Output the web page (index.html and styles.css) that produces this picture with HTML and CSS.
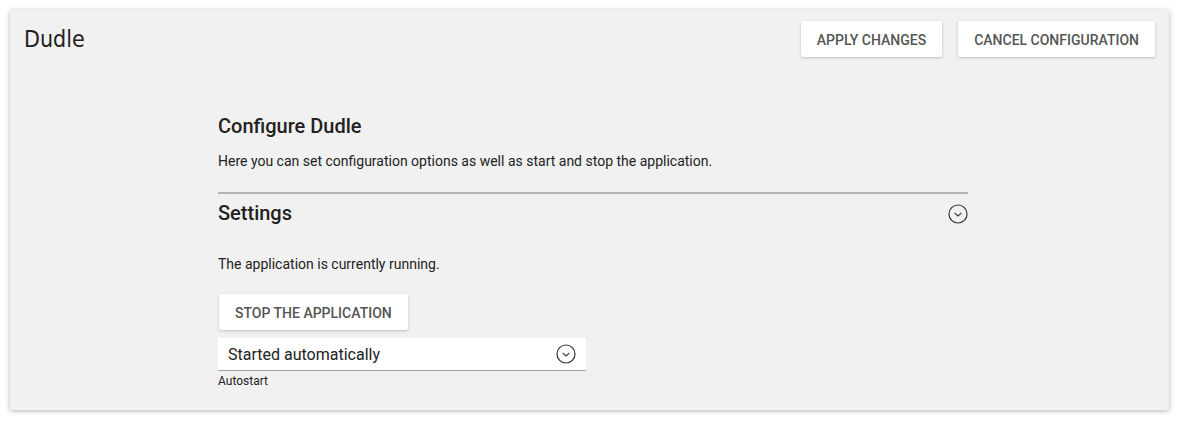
FILE: index.html
```html
<!DOCTYPE html>
<html>
<head>
<meta charset="utf-8">
<link rel="stylesheet" href="styles.css">
</head>
<body>
<div class="panel">
  <div class="header">
    <div class="title">Dudle</div>
    <div class="actions">
      <button class="btn">Apply changes</button>
      <button class="btn">Cancel configuration</button>
    </div>
  </div>
  <div class="content">
    <h2 class="heading">Configure Dudle</h2>
    <p class="desc">Here you can set configuration options as well as start and stop the application.</p>
    <div class="section">
      <div class="section-head">
        <h3 class="heading">Settings</h3>
        <svg class="chev" width="20" height="20" viewBox="0 0 20 20"><circle cx="10" cy="10" r="9" fill="none" stroke="#333" stroke-width="1.2"/><path d="M6.6 8.9 L10 12 L13.4 8.9" fill="none" stroke="#333" stroke-width="1.2"/></svg>
      </div>
      <p class="status">The application is currently running.</p>
      <button class="btn stop">Stop the application</button>
      <div class="select">
        <span>Started automatically</span>
        <svg class="chev" width="20" height="20" viewBox="0 0 20 20"><circle cx="10" cy="10" r="9" fill="none" stroke="#333" stroke-width="1.2"/><path d="M6.6 8.9 L10 12 L13.4 8.9" fill="none" stroke="#333" stroke-width="1.2"/></svg>
      </div>
      <div class="hint">Autostart</div>
    </div>
  </div>
</div>
</body>
</html>
```

FILE: styles.css
```css
html, body {
  margin: 0;
  padding: 0;
  background: #ffffff;
}
body {
  font-family: Roboto, "Liberation Sans", sans-serif;
  color: #222;
}
.panel {
  margin: 10px;
  width: 1159px;
  height: 400px;
  box-sizing: border-box;
  background: #f1f1f1;
  box-shadow: 0 1px 5px rgba(0,0,0,0.3);
}
.header {
  display: flex;
  justify-content: space-between;
  align-items: center;
  padding: 11px 14px 0 14px;
  height: 36px;
}
.title {
  font-family: "DejaVu Sans Condensed", "DejaVu Sans", sans-serif;
  font-size: 23px;
  color: #222;
}
.actions {
  display: flex;
  gap: 16px;
}
.btn {
  font-family: Roboto, sans-serif;
  font-weight: 500;
  font-size: 14px;
  text-transform: uppercase;
  color: #555;
  background: #fff;
  border: none;
  border-radius: 2px;
  height: 36px;
  padding: 1px 16px 0 16px;
  box-shadow: 0 1px 3px rgba(0,0,0,0.22);
  cursor: pointer;
}
.content {
  margin-left: 208px;
  width: 750px;
  padding-top: 57px;
}
.heading {
  margin: 0;
  font-size: 20px;
  font-weight: 500;
  line-height: 24px;
  color: #222;
}
.desc {
  margin: 13px 0 0 0;
  font-size: 14px;
  line-height: 20px;
  color: #222;
}
.section {
  margin-top: 21px;
  border-top: 2px solid #b3b3b3;
}
.section-head {
  display: flex;
  justify-content: space-between;
  align-items: center;
  padding-top: 7px;
}
.section-head .chev {
  margin-top: 2px;
}
.status {
  margin: 29px 0 0 0;
  font-size: 14px;
  line-height: 20px;
}
.stop {
  margin-top: 20px;
  margin-left: 1px;
  display: block;
}
.select {
  margin-top: 8px;
  width: 368px;
  height: 33px;
  box-sizing: border-box;
  background: #fff;
  border-bottom: 1px solid #9e9e9e;
  display: flex;
  align-items: center;
  justify-content: space-between;
  padding: 0 10px;
  font-size: 16px;
  color: #222;
}
.hint {
  margin-top: 3px;
  font-size: 12px;
  line-height: 14px;
  color: #222;
}
```
